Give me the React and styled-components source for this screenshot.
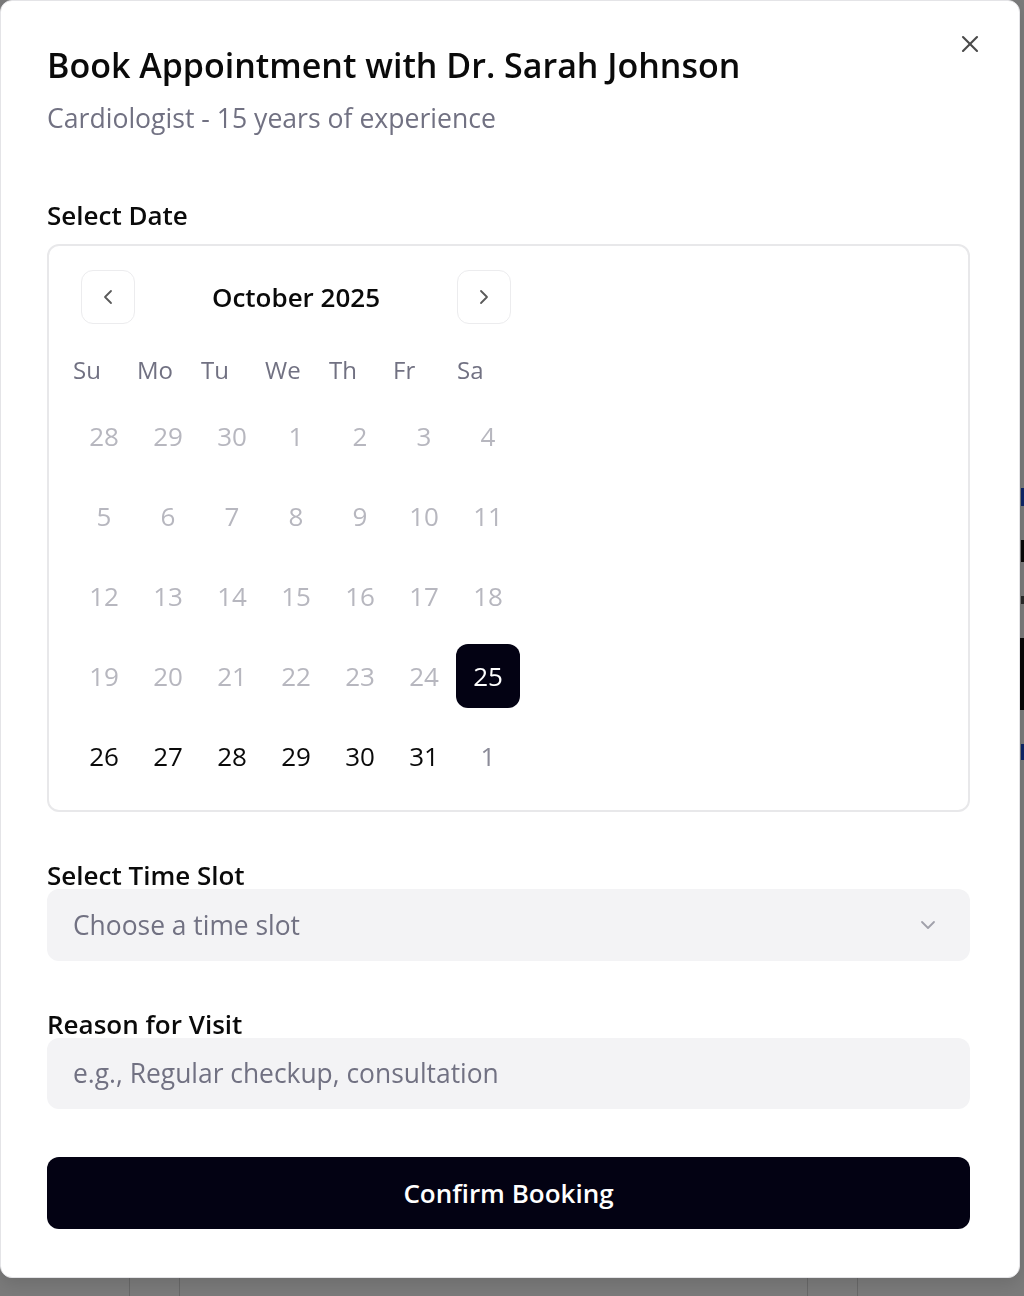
import React, { useState } from 'react'
import styled, { createGlobalStyle } from 'styled-components'
import { X, ChevronLeft, ChevronRight, ChevronDown } from 'lucide-react'

const GlobalStyle = createGlobalStyle`
  html, body {
    margin: 0;
    padding: 0;
    background: #ffffff;
    font-family: "Open Sans", "Noto Sans", sans-serif;
    color: #0a0a0a;
  }
  * { box-sizing: border-box; }
`

// page behind the dialog, mostly hidden
const Page = styled.div`
  height: 1296px;
  display: flex;
  flex-direction: column;
  justify-content: space-between;
  padding-top: 488px;
`

const SideStrip = styled.div`
  display: flex;
  flex-direction: column;
  align-items: flex-end;
  gap: 34px;
`

const SideMark = styled.div`
  width: ${(p) => p.w || 8}px;
  height: ${(p) => p.h || 20}px;
  background: ${(p) => p.c || '#111'};
`

const BottomRow = styled.div`
  display: flex;
  height: 40px;
  padding-left: 129px;
`

const Col = styled.div`
  width: ${(p) => p.w}px;
  border-left: 1px solid #d8d8d8;
`

const Overlay = styled.div`
  position: fixed;
  inset: 0;
  background: rgba(0, 0, 0, 0.52);
`

const Dialog = styled.div`
  position: fixed;
  left: 0;
  top: 0;
  width: 1020px;
  height: 1278px;
  background: #ffffff;
  border: 1px solid #e4e4e7;
  border-radius: 12px;
  box-shadow: 0 6px 18px rgba(0, 0, 0, 0.12);
  padding: 41px 49px 48px 46px;
  display: flex;
  flex-direction: column;
`

const CloseButton = styled.button`
  position: absolute;
  top: 29px;
  right: 35px;
  border: none;
  background: transparent;
  padding: 0;
  color: #4a4a4a;
  display: flex;
  cursor: pointer;
`

const Title = styled.h2`
  margin: 0;
  font-size: 34px;
  line-height: 46px;
  font-weight: 600;
  color: #0a0a0a;
`

const Subtitle = styled.p`
  margin: 12px 0 0;
  font-size: 26.6px;
  line-height: 36px;
  color: #717182;
`

const Label = styled.div`
  font-size: 26px;
  line-height: 28px;
  font-weight: 600;
  color: #0a0a0a;
  margin-top: ${(p) => p.mt || 0}px;
  margin-bottom: ${(p) => p.mb || 0}px;
`

const CalendarBox = styled.div`
  border: 2px solid #e8e8ea;
  border-radius: 12px;
  padding: 24px 23px 21px;
  height: 570px;
`

const CalendarInner = styled.div`
  width: 448px;
  display: flex;
  flex-direction: column;
`

const NavRow = styled.div`
  display: flex;
  align-items: center;
  justify-content: space-between;
  padding: 0 9px;
`

const NavButton = styled.button`
  width: 54px;
  height: 54px;
  border: 1.5px solid #ececee;
  border-radius: 12px;
  background: #fff;
  color: #5a5a5a;
  display: flex;
  align-items: center;
  justify-content: center;
  padding: 0;
  cursor: pointer;
`

const MonthLabel = styled.div`
  font-size: 26px;
  font-weight: 600;
  color: #0a0a0a;
`

const Grid = styled.div`
  display: grid;
  grid-template-columns: repeat(7, 64px);
  row-gap: 16px;
`

const WeekHead = styled.div`
  font-size: 24px;
  line-height: 32px;
  color: #717182;
  padding-left: 1px;
  margin-top: 30px;
  margin-bottom: 2px;
`

const Day = styled.button`
  width: 64px;
  height: 64px;
  border: none;
  border-radius: 12px;
  padding: 0;
  font-family: inherit;
  font-size: 26px;
  display: flex;
  align-items: center;
  justify-content: center;
  cursor: pointer;
  background: ${(p) => (p.selected ? '#030213' : 'transparent')};
  color: ${(p) =>
    p.selected ? '#ffffff' : p.past ? '#b7b7bf' : p.outside ? '#8b8b98' : '#0a0a0a'};
`

const FieldBox = styled.div`
  height: 72px;
  border-radius: 12px;
  background: #f3f3f5;
  padding: 0 30px 0 26px;
  display: flex;
  align-items: center;
  justify-content: space-between;
  font-size: 26.4px;
  color: #717182;
`

const TextInput = styled.input`
  height: 72px;
  border-radius: 12px;
  border: none;
  outline: none;
  background: #f3f3f5;
  padding: 0 26px;
  font-family: inherit;
  font-size: 26.4px;
  color: #0a0a0a;
  &::placeholder { color: #717182; }
`

const ConfirmButton = styled.button`
  margin-top: 48px;
  height: 72px;
  border: none;
  border-radius: 12px;
  background: #030213;
  color: #ffffff;
  font-family: inherit;
  font-size: 26px;
  font-weight: 600;
  cursor: pointer;
`

const weekdays = ['Su', 'Mo', 'Tu', 'We', 'Th', 'Fr', 'Sa']

const buildDays = () => {
  const days = []
  ;[28, 29, 30].forEach((d) => days.push({ d, past: true, key: 'p' + d }))
  for (let d = 1; d <= 31; d++) {
    days.push({ d, past: d < 25, key: 'c' + d })
  }
  days.push({ d: 1, outside: true, key: 'n1' })
  return days
}

export default function App() {
  const [selected, setSelected] = useState(25)
  const days = buildDays()

  return (
    <>
      <GlobalStyle />
      <Page>
        <SideStrip>
          <SideMark w={3} h={18} c="#1d4ed8" />
          <SideMark w={3} h={22} c="#111" />
          <SideMark w={3} h={8} c="#555" />
          <SideMark w={4} h={72} c="#111" />
          <SideMark w={3} h={16} c="#1d4ed8" />
        </SideStrip>
        <BottomRow>
          <Col w={50} />
          <Col w={628} />
          <Col w={50} />
          <Col w={100} />
        </BottomRow>
      </Page>
      <Overlay />
      <Dialog>
        <CloseButton aria-label="Close">
          <X size={28} strokeWidth={1.8} />
        </CloseButton>
        <Title>Book Appointment with Dr. Sarah Johnson</Title>
        <Subtitle>Cardiologist - 15 years of experience</Subtitle>

        <Label mt={65} mb={15}>Select Date</Label>
        <CalendarBox>
          <CalendarInner>
            <NavRow>
              <NavButton aria-label="Previous month">
                <ChevronLeft size={24} strokeWidth={1.8} />
              </NavButton>
              <MonthLabel>October 2025</MonthLabel>
              <NavButton aria-label="Next month">
                <ChevronRight size={24} strokeWidth={1.8} />
              </NavButton>
            </NavRow>
            <Grid>
              {weekdays.map((w) => (
                <WeekHead key={w}>{w}</WeekHead>
              ))}
              {days.map((day) => (
                <Day
                  key={day.key}
                  past={day.past ? 1 : 0}
                  outside={day.outside ? 1 : 0}
                  selected={!day.past && !day.outside && day.d === selected}
                  onClick={() => !day.past && !day.outside && setSelected(day.d)}
                >
                  {day.d}
                </Day>
              ))}
            </Grid>
          </CalendarInner>
        </CalendarBox>

        <Label mt={49}>Select Time Slot</Label>
        <FieldBox>
          <span>Choose a time slot</span>
          <ChevronDown size={24} strokeWidth={1.8} color="#a0a0aa" />
        </FieldBox>

        <Label mt={49}>Reason for Visit</Label>
        <TextInput placeholder="e.g., Regular checkup, consultation" />

        <ConfirmButton>Confirm Booking</ConfirmButton>
      </Dialog>
    </>
  )
}
